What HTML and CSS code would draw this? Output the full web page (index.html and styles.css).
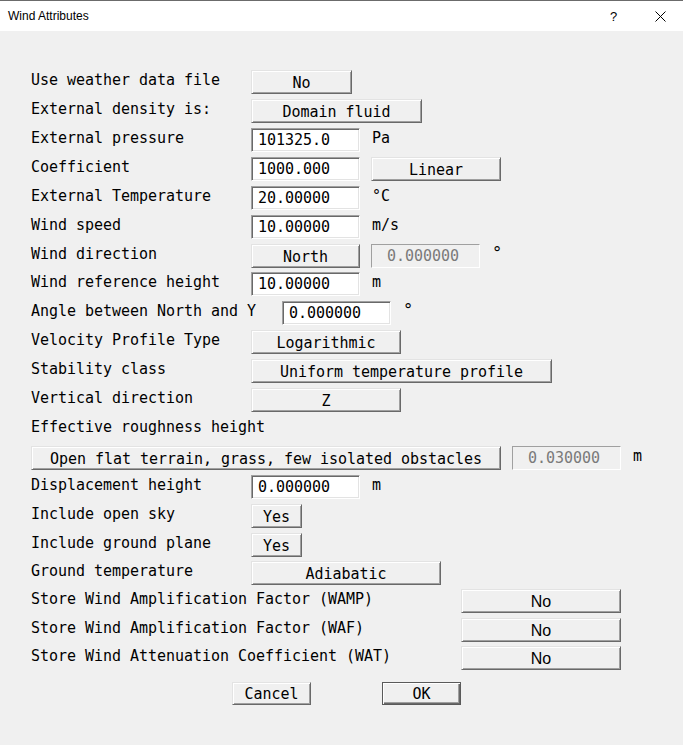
FILE: index.html
```html
<!DOCTYPE html>
<html>
<head>
<meta charset="utf-8">
<link rel="stylesheet" href="styles.css">
</head>
<body>
<div class="window">
  <div class="titlebar">
    <span class="title">Wind Attributes</span>
    <span class="help">?</span>
    <svg class="close" width="11" height="11" viewBox="0 0 11 11"><path d="M0.5 0.5 L10.5 10.5 M10.5 0.5 L0.5 10.5" stroke="#000" stroke-width="1" fill="none"/></svg>
  </div>
  <div class="content">
    <div class="row"><span class="lbl">Use weather data file</span><span class="btn w100">No</span></div>
    <div class="row"><span class="lbl">External density is:</span><span class="btn w170">Domain fluid</span></div>
    <div class="row"><span class="lbl">External pressure</span><span class="inp">101325.0</span><span class="unit">Pa</span></div>
    <div class="row"><span class="lbl">Coefficient</span><span class="inp">1000.000</span><span class="btn w130 ml">Linear</span></div>
    <div class="row"><span class="lbl">External Temperature</span><span class="inp">20.00000</span><span class="unit">°C</span></div>
    <div class="row"><span class="lbl">Wind speed</span><span class="inp">10.00000</span><span class="unit">m/s</span></div>
    <div class="row t"><span class="lbl">Wind direction</span><span class="btn w109">North</span><span class="inp dis ml">0.000000</span><span class="unit deg">°</span></div>
    <div class="row"><span class="lbl">Wind reference height</span><span class="inp">10.00000</span><span class="unit">m</span></div>
    <div class="row"><span class="lbl wide">Angle between North and Y</span><span class="inp">0.000000</span><span class="unit deg">°</span></div>
    <div class="row"><span class="lbl">Velocity Profile Type</span><span class="btn w150">Logarithmic</span></div>
    <div class="row"><span class="lbl">Stability class</span><span class="btn w300">Uniform temperature profile</span></div>
    <div class="row"><span class="lbl">Vertical direction</span><span class="btn w150">Z</span></div>
    <div class="row"><span class="lbl auto">Effective roughness height</span></div>
    <div class="row"><span class="btn w470">Open flat terrain, grass, few isolated obstacles</span><span class="inp dis ml">0.030000</span><span class="unit">m</span></div>
    <div class="row"><span class="lbl">Displacement height</span><span class="inp">0.000000</span><span class="unit">m</span></div>
    <div class="row"><span class="lbl">Include open sky</span><span class="btn w50">Yes</span></div>
    <div class="row t"><span class="lbl">Include ground plane</span><span class="btn w50">Yes</span></div>
    <div class="row t"><span class="lbl">Ground temperature</span><span class="btn w190">Adiabatic</span></div>
    <div class="row"><span class="lbl widest">Store Wind Amplification Factor (WAMP)</span><span class="btn w160 sans">No</span></div>
    <div class="row t"><span class="lbl widest">Store Wind Amplification Factor (WAF)</span><span class="btn w160 sans">No</span></div>
    <div class="row last"><span class="lbl widest">Store Wind Attenuation Coefficient (WAT)</span><span class="btn w160 sans">No</span></div>
    <div class="row actions"><span class="btn dlg">Cancel</span><span class="btn dlg def">OK</span></div>
  </div>
</div>
</body>
</html>
```

FILE: styles.css
```css
html, body {
  margin: 0;
  padding: 0;
  background: #f0f0f0;
}
.window {
  width: 683px;
  height: 745px;
  background: #f0f0f0;
  font-family: "DejaVu Sans Mono", "Liberation Mono", monospace;
  font-size: 15px;
  letter-spacing: -0.03px;
  color: #000;
}
.titlebar {
  height: 30px;
  border-top: 1px solid #6b6b6b;
  background: #fff;
  display: flex;
  align-items: center;
  font-family: "Liberation Sans", Arial, sans-serif;
  font-size: 12px;
  letter-spacing: 0;
}
.title {
  margin-left: 8px;
  flex: 1;
}
.help {
  width: 8px;
  margin-right: 37px;
  font-size: 13px;
}
.close {
  margin-right: 17px;
}
.content {
  padding: 39px 0 0 31px;
}
.row {
  display: flex;
  align-items: center;
  height: 24px;
  margin-bottom: 5px;
  white-space: pre;
}
.row.t {
  margin-bottom: 4px;
}
.row.last {
  margin-bottom: 12px;
}
.lbl {
  flex: none;
  width: 220px;
  padding-bottom: 5px;
  line-height: 18px;
}
.lbl.wide { width: 251px; }
.lbl.widest { width: 430px; }
.lbl.auto { width: auto; }
.btn {
  flex: none;
  box-sizing: border-box;
  height: 24px;
  display: flex;
  align-items: center;
  justify-content: center;
  background: #f0f0f0;
  border: 1px solid;
  border-color: #e3e3e3 #696969 #696969 #e3e3e3;
  box-shadow: inset 1px 1px #fff, inset -1px -1px #a0a0a0;
  padding-top: 1px;
}
.btn.sans {
  font-family: "Liberation Sans", Arial, sans-serif;
  font-size: 16px;
  letter-spacing: 0;
}
.w50 { width: 51px; }
.w100 { width: 101px; }
.w109 { width: 109px; }
.w130 { width: 130px; }
.w150 { width: 150px; }
.w160 { width: 160px; }
.w170 { width: 171px; }
.w190 { width: 190px; }
.w300 { width: 301px; }
.w470 { width: 470px; }
.ml { margin-left: 11px; }
.inp {
  flex: none;
  box-sizing: border-box;
  width: 109px;
  height: 24px;
  display: flex;
  align-items: center;
  padding-left: 6px;
  background: #fff;
  border: 1px solid;
  border-color: #a0a0a0 #fff #fff #a0a0a0;
  box-shadow: inset 1px 1px #696969, inset -1px -1px #e3e3e3;
}
.inp.dis {
  background: #f0f0f0;
  color: #7a7a7a;
  padding-left: 15px;
  box-shadow: none;
  border-color: #a0a0a0 #fff #fff #a0a0a0;
}
.unit {
  margin-left: 12px;
  padding-bottom: 4px;
}
.unit.deg {
  font-size: 17px;
  padding-bottom: 6px;
}
.actions {
  height: 23px;
}
.dlg {
  width: 79px;
  height: 23px;
}
.actions .dlg:first-child {
  margin-left: 201px;
}
.dlg.def {
  margin-left: 71px;
  border: 1px solid #5a5a5a;
  box-shadow: inset 1px 1px #fff, inset -1px -1px #696969, inset -2px -2px #a0a0a0;
}
```
